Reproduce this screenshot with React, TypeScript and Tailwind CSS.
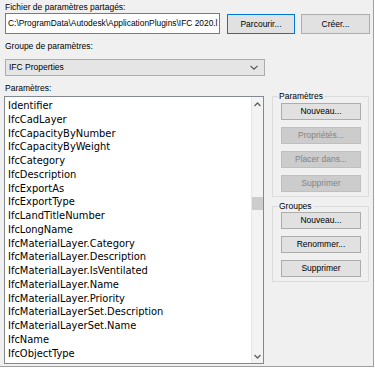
import React from "react";

const items = [
  "Identifier",
  "IfcCadLayer",
  "IfcCapacityByNumber",
  "IfcCapacityByWeight",
  "IfcCategory",
  "IfcDescription",
  "IfcExportAs",
  "IfcExportType",
  "IfcLandTitleNumber",
  "IfcLongName",
  "IfcMaterialLayer.Category",
  "IfcMaterialLayer.Description",
  "IfcMaterialLayer.IsVentilated",
  "IfcMaterialLayer.Name",
  "IfcMaterialLayer.Priority",
  "IfcMaterialLayerSet.Description",
  "IfcMaterialLayerSet.Name",
  "IfcName",
  "IfcObjectType",
];

function Btn({ children, disabled }: { children: React.ReactNode; disabled?: boolean }) {
  return (
    <div
      className={
        disabled
          ? "h-[17px] w-full border border-[#bfbfbf] bg-[#cccccc] text-[#838383] flex items-center justify-center"
          : "h-[17px] w-full border border-[#adadad] bg-[#e1e1e1] text-black flex items-center justify-center"
      }
    >
      {children}
    </div>
  );
}

function Chevron({ up }: { up?: boolean }) {
  return (
    <svg width="7" height="5" viewBox="0 0 7 5" className="block">
      <path
        d={up ? "M0.5 4 L3.5 1 L6.5 4" : "M0.5 1 L3.5 4 L6.5 1"}
        fill="none"
        stroke="#606060"
        strokeWidth="1.3"
      />
    </svg>
  );
}

export default function App() {
  return (
    <div className="w-[375px] h-[368px] bg-white overflow-hidden">
      <div className="w-[374px] h-[367px] bg-[#f0f0f0] border-r border-b border-[#a0a0a0] font-['Liberation_Sans',Arial,sans-serif] text-[8.5px] text-black pl-[5px]">
        <div className="h-[13px] flex items-center pt-[1px]">Fichier de paramètres partagés:</div>
        <div className="flex items-start h-[21px]">
          <div className="w-[215px] h-[21px] border border-[#7a7a7a] bg-white pl-[2px] flex items-center overflow-hidden whitespace-nowrap text-[8.4px]">
            {"C:\\ProgramData\\Autodesk\\ApplicationPlugins\\IFC 2020.l"}
          </div>
          <div className="ml-[7px] mt-[1px] w-[68px] h-[20px] border border-[#0078d7] bg-[#e1e1e1] flex items-center justify-center">
            Parcourir...
          </div>
          <div className="ml-[6px] mt-[1px] w-[69px] h-[20px] border border-[#adadad] bg-[#e1e1e1] flex items-center justify-center">
            Créer...
          </div>
        </div>
        <div className="h-[25px] flex items-center">Groupe de paramètres:</div>
        <div className="w-[260px] h-[17px] border border-[#acacac] bg-[#e5e5e5] flex items-center justify-between pl-[3px] pr-[6px]">
          <span>IFC Properties</span>
          <svg width="8" height="5" viewBox="0 0 8 5" className="block">
            <path d="M0.5 0.8 L4 4.2 L7.5 0.8" fill="none" stroke="#505050" strokeWidth="1.1" />
          </svg>
        </div>
        <div className="h-[20px] pt-[5px] leading-[14px]">Paramètres:</div>
        <div className="flex -ml-[1px]">
          <div className="w-[260px] h-[268px] border border-[#828790] bg-white flex">
            <div className="flex-1 pl-[3px] pt-[2px] font-['DejaVu_Sans_Condensed','Liberation_Sans',sans-serif] text-[11px] leading-[13.75px] overflow-hidden">
              {items.map((t) => (
                <div key={t} className="whitespace-nowrap">
                  {t}
                </div>
              ))}
            </div>
            <div className="w-[12px] border-l border-[#e6e6e6] bg-[#f3f3f3] flex flex-col items-center">
              <div className="h-[14px] flex items-center justify-center">
                <Chevron up />
              </div>
              <div className="flex-1 w-full">
                <div className="mt-[86px] ml-[0px] w-[11px] h-[13px] bg-[#cdcdcd]" />
              </div>
              <div className="h-[14px] flex items-center justify-center">
                <Chevron />
              </div>
            </div>
          </div>
          <div className="ml-[8px] -mt-[6px] w-[97px] flex flex-col">
            <fieldset className="border border-[#dcdcdc] pl-[8px] pr-[7px] pb-[4px] flex flex-col gap-[7px]">
              <legend className="-ml-[3px] px-[1px] leading-[12px]">Paramètres</legend>
              <div className="mt-[1px]">
                <Btn>Nouveau...</Btn>
              </div>
              <Btn disabled>Propriétés...</Btn>
              <Btn disabled>Placer dans...</Btn>
              <Btn disabled>Supprimer</Btn>
            </fieldset>
            <fieldset className="mt-[3px] border border-[#dcdcdc] pl-[8px] pr-[7px] pb-[4px] flex flex-col gap-[7px]">
              <legend className="-ml-[3px] px-[1px] leading-[12px]">Groupes</legend>
              <Btn>Nouveau...</Btn>
              <Btn>Renommer...</Btn>
              <Btn>Supprimer</Btn>
            </fieldset>
          </div>
        </div>
      </div>
    </div>
  );
}
